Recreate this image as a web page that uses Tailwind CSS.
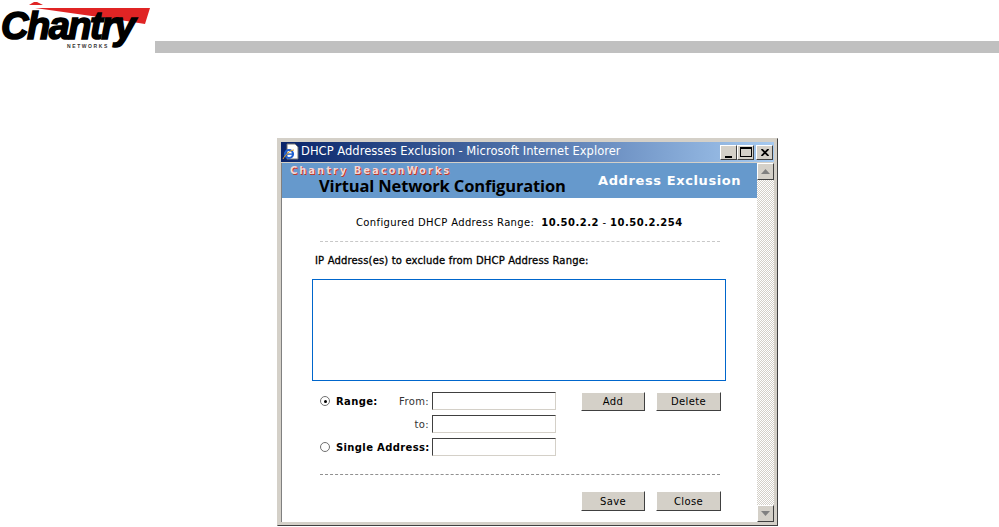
<!DOCTYPE html>
<html lang="en">
<head>
<meta charset="UTF-8">
<title>DHCP Addresses Exclusion</title>
<script src="https://cdn.jsdelivr.net/npm/@tailwindcss/browser@4"></script>
</head>
<body class="bg-white w-[999px] h-[527px] overflow-hidden font-['DejaVu_Sans',sans-serif] text-[10px] text-black">
  <!-- page header -->
  <div class="flex h-[53px]">
    <div class="relative w-[155px] h-[53px] shrink-0">
      <svg class="absolute left-0 top-0" width="155" height="53" viewBox="0 0 155 53">
        <polygon points="29,5 34,2 37,2 43,5" fill="#e02424"/>
        <polygon points="35,8 150,8 145,24 120,20" fill="#e02424"/>
      </svg>
      <span class="absolute left-[1px] top-[11px] font-['Liberation_Sans',sans-serif] font-bold italic text-[38px] leading-[31px] tracking-[-1.5px] [-webkit-text-stroke:1.6px_black]">Chantry</span>
      <span class="absolute left-[67px] top-[43px] font-['Liberation_Sans',sans-serif] font-bold text-[5px] leading-[6px] tracking-[1.6px] text-[#333]">NETWORKS</span>
    </div>
    <div class="self-end h-[12px] flex-1 bg-[#c0c0c0]"></div>
  </div>

  <!-- IE window -->
  <div class="ml-[277px] mt-[85px] w-[501px] h-[388px] bg-[#d4d0c8] border border-[#d4d0c8] border-r-[#404040] border-b-[#404040] p-[3px] flex flex-col">
    <div class="h-[20px] shrink-0 flex items-center pl-[1px] pr-[1px] bg-gradient-to-r from-[#0a246a] to-[#a6caf0] text-white text-[11.5px]">
      <svg width="18" height="18" viewBox="0 0 18 18" class="shrink-0">
        <path d="M5 1H13L16 4V16H5Z" fill="#fff" stroke="#777" stroke-width="1"/>
        <circle cx="7" cy="11" r="4" fill="none" stroke="#1f5fd0" stroke-width="2.2"/>
        <rect x="3" y="10.4" width="8" height="1.4" fill="#1f5fd0"/>
        <path d="M1 16C3 12 8 7 12 7" fill="none" stroke="#e0a020" stroke-width="1"/>
      </svg>
      <span class="ml-[1px] whitespace-nowrap tracking-[0.04px]">DHCP Addresses Exclusion - Microsoft Internet Explorer</span>
      <div class="ml-auto flex items-center">
        <span class="w-[17px] h-[15px] bg-[#d4d0c8] border border-white border-r-[#404040] border-b-[#404040] flex items-end justify-center pb-[1px]"><span class="w-[7px] h-[2px] bg-black"></span></span>
        <span class="w-[17px] h-[15px] bg-[#d4d0c8] border border-white border-r-[#404040] border-b-[#404040] flex items-center justify-center"><span class="w-[12px] h-[10px] border border-black border-t-2"></span></span>
        <span class="ml-[2px] w-[17px] h-[15px] bg-[#d4d0c8] border border-white border-r-[#404040] border-b-[#404040] flex items-center justify-center">
          <svg width="8" height="7" viewBox="0 0 8 7"><path d="M0.5 0L7.5 7M7.5 0L0.5 7" stroke="#000" stroke-width="1.8"/></svg>
        </span>
      </div>
    </div>

    <div class="mt-[1px] flex-1 flex min-h-0 border-l border-[#808080]">
      <!-- page content -->
      <div class="w-[475px] shrink-0 bg-white flex flex-col tracking-[0.36px]">
        <div class="relative h-[35px] shrink-0 bg-[#6699cc]">
          <span class="absolute left-[8px] top-[3px] font-bold text-[10px] leading-[10px] tracking-[1.95px] text-[#f3d6d6] [text-shadow:1px_1px_0_#c0392b]">Chantry BeaconWorks</span>
          <span class="absolute left-[37px] top-[13px] font-['Open_Sans',sans-serif] font-bold text-[16.5px] leading-[20px] tracking-[-0.15px]">Virtual Network Configuration</span>
          <span class="absolute left-[316px] top-[10px] font-bold text-[13px] leading-[16px] tracking-[0.6px] text-white">Address Exclusion</span>
        </div>

        <p class="mt-[18px] ml-[74px] leading-[14px] whitespace-nowrap">Configured DHCP Address Range: &nbsp;<b class="tracking-[0.5px]">10.50.2.2</b> - <b class="tracking-[0.5px]">10.50.2.254</b></p>
        <div class="mt-[11px] ml-[38px] w-[400px] border-t border-dashed border-[#c8c8c8]"></div>

        <p class="mt-[12px] ml-[33px] leading-[14px] tracking-[0.16px] [-webkit-text-stroke:0.3px_black] whitespace-nowrap">IP Address(es) to exclude from DHCP Address Range:</p>
        <div class="mt-[11px] ml-[30px] w-[414px] h-[102px] border border-[#0066cc]"></div>

        <div class="mt-[11px] ml-[38px] flex">
          <div class="w-[236px] grid grid-cols-[16px_61px_35px_124px] grid-rows-[18px_18px_18px] gap-y-[5px] items-center">
            <span class="w-[10px] h-[10px] rounded-full border border-[#707070] flex items-center justify-center"><span class="w-[3px] h-[3px] rounded-full bg-black"></span></span>
            <b>Range:</b>
            <span class="text-right pr-[3px] text-[#333]">From:</span>
            <span class="h-[18px] bg-white border border-[#d4d0c8] border-l-[#404040] border-t-[#404040]"></span>
            <span></span>
            <span></span>
            <span class="text-right pr-[3px] text-[#333]">to:</span>
            <span class="h-[18px] bg-white border border-[#d4d0c8] border-l-[#404040] border-t-[#404040]"></span>
            <span class="w-[10px] h-[10px] rounded-full border border-[#707070]"></span>
            <b class="col-span-2 whitespace-nowrap">Single Address:</b>
            <span class="h-[18px] bg-white border border-[#d4d0c8] border-l-[#404040] border-t-[#404040]"></span>
          </div>
          <div class="ml-[25px] flex gap-[11px] h-[19px]">
            <button class="w-[64px] h-[19px] bg-[#d4d0c8] border border-white border-r-[#404040] border-b-[#404040] text-center">Add</button>
            <button class="w-[65px] h-[19px] bg-[#d4d0c8] border border-white border-r-[#404040] border-b-[#404040] text-center">Delete</button>
          </div>
        </div>

        <div class="mt-[18px] ml-[38px] w-[400px] border-t border-dashed border-[#909090]"></div>
        <div class="mt-[16px] ml-[299px] flex gap-[11px]">
          <button class="w-[64px] h-[20px] bg-[#d4d0c8] border border-white border-r-[#404040] border-b-[#404040] text-center">Save</button>
          <button class="w-[65px] h-[20px] bg-[#d4d0c8] border border-white border-r-[#404040] border-b-[#404040] text-center">Close</button>
        </div>
      </div>

      <!-- scrollbar -->
      <div class="w-[17px] shrink-0 flex flex-col justify-between bg-[repeating-conic-gradient(#d4d0c8_0_25%,#ffffff_0_50%)] bg-[length:2px_2px]">
        <span class="h-[17px] bg-[#d4d0c8] border border-white border-r-[#404040] border-b-[#404040] flex items-center justify-center">
          <svg width="9" height="5" viewBox="0 0 9 5"><path d="M4.5 0L9 5H0Z" fill="#808080"/></svg>
        </span>
        <span class="h-[17px] bg-[#d4d0c8] border border-white border-r-[#404040] border-b-[#404040] flex items-center justify-center">
          <svg width="9" height="5" viewBox="0 0 9 5"><path d="M0 0H9L4.5 5Z" fill="#808080"/></svg>
        </span>
      </div>
    </div>
  </div>
</body>
</html>
